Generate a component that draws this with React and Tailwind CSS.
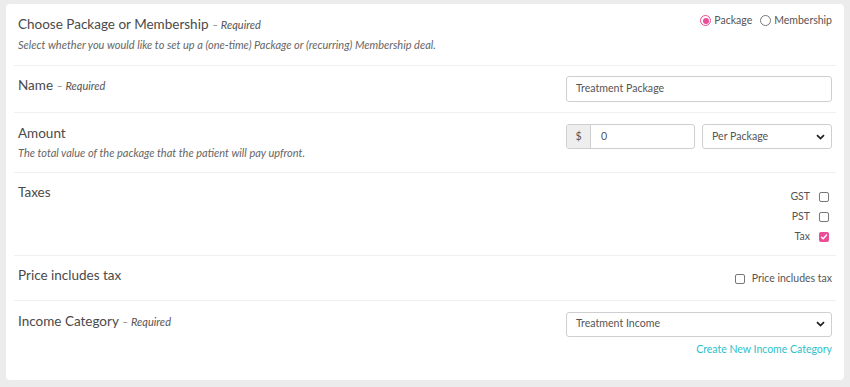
import { useState } from "react";

const FONT = { fontFamily: "Lato, 'Liberation Sans', Arial, sans-serif" };

function Required() {
  return <span className="text-[11px] italic text-[#555]">– Required</span>;
}

function Check({ checked }) {
  return checked ? (
    <span className="w-[10px] h-[10px] rounded-[2px] bg-[#ea4c95] flex items-center justify-center">
      <svg width="8" height="8" viewBox="0 0 8 8">
        <path d="M1.5 4.2 L3.2 5.8 L6.5 2" stroke="white" strokeWidth="1.4" fill="none" strokeLinecap="round" />
      </svg>
    </span>
  ) : (
    <span className="w-[10px] h-[10px] rounded-[2px] border border-[#777] bg-white" />
  );
}

function Chevron() {
  return (
    <svg width="9" height="6" viewBox="0 0 9 6">
      <path d="M1 1.2 L4.5 4.6 L8 1.2" stroke="#222" strokeWidth="1.8" fill="none" />
    </svg>
  );
}

function Row({ children, className = "" }) {
  return (
    <div className={`flex justify-between items-start px-[4px] border-b border-[#efefef] ${className}`}>
      {children}
    </div>
  );
}

function Label({ children }) {
  return <div className="text-[13.5px] leading-[18px] text-[#4a4a4a]">{children}</div>;
}

function Hint({ children }) {
  return <div className="text-[11px] italic text-[#666] leading-[16px] mt-[3px]">{children}</div>;
}

function Radio({ on, label, onClick }) {
  return (
    <button className="flex items-center gap-[3px]" onClick={onClick}>
      <span
        className={`w-[11px] h-[11px] rounded-full border flex items-center justify-center ${
          on ? "border-[#ea4c95]" : "border-[#777]"
        }`}
      >
        {on && <span className="w-[6px] h-[6px] rounded-full bg-[#ea4c95]" />}
      </span>
      {label}
    </button>
  );
}

export default function App() {
  const [kind, setKind] = useState("package");
  const taxes = [
    { name: "GST", on: false },
    { name: "PST", on: false },
    { name: "Tax", on: true },
  ];

  return (
    <div className="min-h-screen bg-[#ececec] pt-[4px] px-[6px]" style={FONT}>
      <div className="bg-white rounded-[4px] px-[8px] h-[376px]">
        {/* Package / membership */}
        <Row className="pt-[11px] pb-[12px]">
          <div>
            <Label>
              Choose Package or Membership <Required />
            </Label>
            <Hint>Select whether you would like to set up a (one-time) Package or (recurring) Membership deal.</Hint>
          </div>
          <div className="flex items-center gap-[8px] text-[10.5px] text-[#555] mt-[-2px]">
            <Radio on={kind === "package"} label="Package" onClick={() => setKind("package")} />
            <Radio on={kind === "membership"} label="Membership" onClick={() => setKind("membership")} />
          </div>
        </Row>

        {/* Name */}
        <Row className="py-[10px]">
          <Label>
            Name <Required />
          </Label>
          <div className="w-[266px] h-[26px] border border-[#cfcfcf] rounded-[3px] flex items-center px-[9px] text-[10.6px] text-[#555]">
            Treatment Package
          </div>
        </Row>

        {/* Amount */}
        <Row className="pt-[11px] pb-[11px]">
          <div>
            <Label>Amount</Label>
            <Hint>The total value of the package that the patient will pay upfront.</Hint>
          </div>
          <div className="flex gap-[7px]">
            <div className="flex w-[129px] h-[25px] border border-[#cfcfcf] rounded-[3px] overflow-hidden text-[10.6px] text-[#555]">
              <div className="w-[24px] bg-[#eeeeee] border-r border-[#cfcfcf] flex items-center justify-center">$</div>
              <div className="flex items-center px-[10px]">0</div>
            </div>
            <div className="w-[130px] h-[25px] border border-[#cfcfcf] rounded-[3px] flex items-center justify-between pl-[9px] pr-[6px] text-[10.6px] text-[#555]">
              Per Package
              <Chevron />
            </div>
          </div>
        </Row>

        {/* Taxes */}
        <Row className="pt-[10px] pb-[8px]">
          <Label>Taxes</Label>
          <div className="flex flex-col items-end mt-[4px] mr-[3px] text-[10.5px] text-[#555]">
            {taxes.map((t) => (
              <div key={t.name} className="h-[20px] flex items-center gap-[9px]">
                {t.name}
                <Check checked={t.on} />
              </div>
            ))}
          </div>
        </Row>

        {/* Price includes tax */}
        <Row className="pt-[10px] pb-[13px]">
          <Label>Price includes tax</Label>
          <div className="flex items-center gap-[7px] mt-[5px] text-[10.5px] text-[#555]">
            <Check checked={false} />
            Price includes tax
          </div>
        </Row>

        {/* Income category */}
        <div className="flex justify-between items-start px-[4px] pt-[11px]">
          <Label>
            Income Category <Required />
          </Label>
          <div className="flex flex-col items-end">
            <div className="w-[266px] h-[25px] border border-[#cfcfcf] rounded-[3px] flex items-center justify-between pl-[9px] pr-[6px] text-[10.6px] text-[#555]">
              Treatment Income
              <Chevron />
            </div>
            <a className="mt-[5px] text-[10.5px] text-[#2ebfcb] cursor-pointer">Create New Income Category</a>
          </div>
        </div>
      </div>
    </div>
  );
}
